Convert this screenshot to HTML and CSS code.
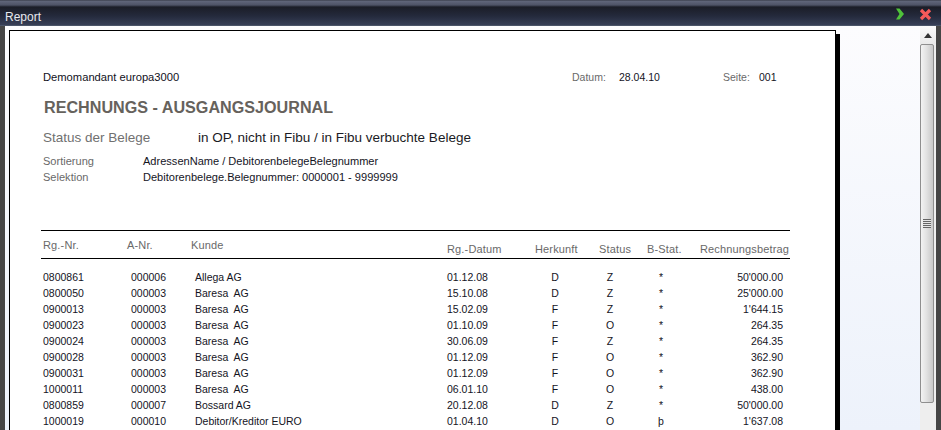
FILE: index.html
```html
<!DOCTYPE html>
<html lang="de">
<head>
<meta charset="utf-8">
<title>Report</title>
<link rel="stylesheet" href="styles.css">
</head>
<body>
<div class="window">
  <header class="titlebar">
    <span class="title">Report</span>
    <div class="controls">
      <svg class="icon" width="12" height="14" viewBox="0 0 12 14"><path d="M2 1.500h3.500L10 7l-4.500 5.500H2L5.500 7z" fill="#4fc23a"/></svg>
      <svg class="icon" width="13" height="13" viewBox="0 0 13 13"><path d="M2 2l9 9M11 2l-9 9" stroke="#f45a5a" stroke-width="3.200" fill="none"/></svg>
    </div>
  </header>
  <div class="body">
    <main class="viewport">
      <article class="sheet">
        <div class="top">
          <span class="company">Demomandant europa3000</span>
          <span class="label date-label">Datum:</span><span class="date-value">28.04.10</span>
          <span class="label page-label">Seite:</span><span class="page-value">001</span>
        </div>
        <h1 class="heading">RECHNUNGS - AUSGANGSJOURNAL</h1>
        <div class="status"><span class="status-label">Status der Belege</span><span class="status-value">in OP, nicht in Fibu / in Fibu verbuchte Belege</span></div>
        <div class="meta"><span class="label">Sortierung</span><span>AdressenName / DebitorenbelegeBelegnummer</span></div>
        <div class="meta"><span class="label">Selektion</span><span>Debitorenbelege.Belegnummer: 0000001 - 9999999</span></div>
        <div class="table-head">
          <span>Rg.-Nr.</span><span>A-Nr.</span><span>Kunde</span><span class="low">Rg.-Datum</span><span class="low">Herkunft</span><span class="low">Status</span><span class="low">B-Stat.</span><span class="low h-amount">Rechnungsbetrag</span>
        </div>
        <div class="rows">
          <div class="row"><span>0800861</span><span>000006</span><span>Allega AG</span><span>01.12.08</span><span class="c">D</span><span class="c">Z</span><span class="c">*</span><span class="r">50'000.00</span></div>
          <div class="row"><span>0800050</span><span>000003</span><span>Baresa&nbsp; AG</span><span>15.10.08</span><span class="c">D</span><span class="c">Z</span><span class="c">*</span><span class="r">25'000.00</span></div>
          <div class="row"><span>0900013</span><span>000003</span><span>Baresa&nbsp; AG</span><span>15.02.09</span><span class="c">F</span><span class="c">Z</span><span class="c">*</span><span class="r">1'644.15</span></div>
          <div class="row"><span>0900023</span><span>000003</span><span>Baresa&nbsp; AG</span><span>01.10.09</span><span class="c">F</span><span class="c">O</span><span class="c">*</span><span class="r">264.35</span></div>
          <div class="row"><span>0900024</span><span>000003</span><span>Baresa&nbsp; AG</span><span>30.06.09</span><span class="c">F</span><span class="c">Z</span><span class="c">*</span><span class="r">264.35</span></div>
          <div class="row"><span>0900028</span><span>000003</span><span>Baresa&nbsp; AG</span><span>01.12.09</span><span class="c">F</span><span class="c">O</span><span class="c">*</span><span class="r">362.90</span></div>
          <div class="row"><span>0900031</span><span>000003</span><span>Baresa&nbsp; AG</span><span>01.12.09</span><span class="c">F</span><span class="c">O</span><span class="c">*</span><span class="r">362.90</span></div>
          <div class="row"><span>1000011</span><span>000003</span><span>Baresa&nbsp; AG</span><span>06.01.10</span><span class="c">F</span><span class="c">O</span><span class="c">*</span><span class="r">438.00</span></div>
          <div class="row"><span>0800859</span><span>000007</span><span>Bossard AG</span><span>20.12.08</span><span class="c">D</span><span class="c">Z</span><span class="c">*</span><span class="r">50'000.00</span></div>
          <div class="row"><span>1000019</span><span>000010</span><span>Debitor/Kreditor EURO</span><span>01.04.10</span><span class="c">D</span><span class="c">O</span><span class="c">þ</span><span class="r">1'637.08</span></div>
        </div>
      </article>
    </main>
    <aside class="scrollbar">
      <div class="arrow"><svg width="8" height="5" viewBox="0 0 8 5"><path d="M4 0l4 5H0z" fill="#333"/></svg></div>
      <div class="thumb"><div class="grip"></div></div>
    </aside>
  </div>
</div>
</body>
</html>
```
FILE: styles.css
```css
* { box-sizing: border-box; }
html, body { margin: 0; padding: 0; overflow: hidden; }
body { width: 941px; height: 430px; font-family: "Liberation Sans", Arial, sans-serif; font-size: 10.500px; color: #14141e; }
.window { width: 941px; height: 430px; display: flex; flex-direction: column; background: #454545; overflow: hidden; }
.titlebar { height: 26px; flex: none; display: flex; align-items: center; justify-content: space-between; padding: 8px 9px 0 5px; border-bottom: 1px solid #4a5468;
  background: linear-gradient(#30333e 0, #60667a 1px, #4e5366 5px, #1b1d27 7px, #242a3c 16px, #39415a 26px); }
.title { color: #e6e8ee; font-size: 12px; }
.controls { display: flex; align-items: center; gap: 13px; margin-top: -5px; }
.icon { display: block; }
.body { flex: 1; min-height: 0; display: flex; padding: 0 5px; }
.viewport { width: 915px; flex: none; padding: 4px 0 0 4px; background: linear-gradient(#fcfcfe, #edf2fb); overflow: hidden; }
.sheet { width: 827px; height: 600px; background: #fff; border: 1px solid #000; box-shadow: 4px 4px 0 #000; padding: 38px 0 0 33px; }
.top { display: grid; grid-template-columns: 529px 47px 104px 36px 1fr; line-height: 16px; }
.company { color: #111122; font-size: 11.200px; }
.label { color: #696969; }
.heading { margin: 13px 0 0 1px; font-size: 16.150px; line-height: 18px; font-weight: bold; color: #66625c; }
.status { display: grid; grid-template-columns: 155px 1fr; margin-top: 14px; font-size: 13.500px; line-height: 16px; }
.status-label { color: #707070; }
.status-value { color: #1a1a24; }
.meta { display: grid; grid-template-columns: 100px 1fr; line-height: 16px; font-size: 11.050px; }
.status + .meta { margin-top: 7px; }
.table-head { display: grid; grid-template-columns: 84px 64px 256px 88px 64px 48px 52px 1fr; width: 749px; margin: 45px 0 0 -2px; height: 29px; padding: 6px 1px 0 2px; border-top: 1px solid #000; border-bottom: 1px solid #000; color: #696969; line-height: 16px; font-size: 11px; letter-spacing: .15px; }
.low { padding-top: 4px; }
.h-amount { text-align: right; white-space: nowrap; }
.rows { margin-top: 10px; width: 740px; }
.row { display: grid; grid-template-columns: 88px 64px 252px 88px 40px 70px 32px 106px; height: 16px; line-height: 16px; }
.c { text-align: center; }
.r { text-align: right; }
.scrollbar { width: 16px; flex: none; background: #eeeeee; display: flex; flex-direction: column; }
.arrow { height: 18px; display: flex; align-items: center; justify-content: center; background: linear-gradient(#fbfbfb, #e9e9e9); }
.thumb { height: 359px; width: 14px; border: 1px solid #8f8f8f; border-radius: 2px; display: flex; align-items: center; justify-content: center;
  background: linear-gradient(90deg, #f3f3f3, #e2e2e2 45%, #c8c8c8); }
.grip { width: 8px; height: 9px; background: repeating-linear-gradient(#666 0, #666 1px, #e6e6e6 1px, #e6e6e6 2px); }
```
